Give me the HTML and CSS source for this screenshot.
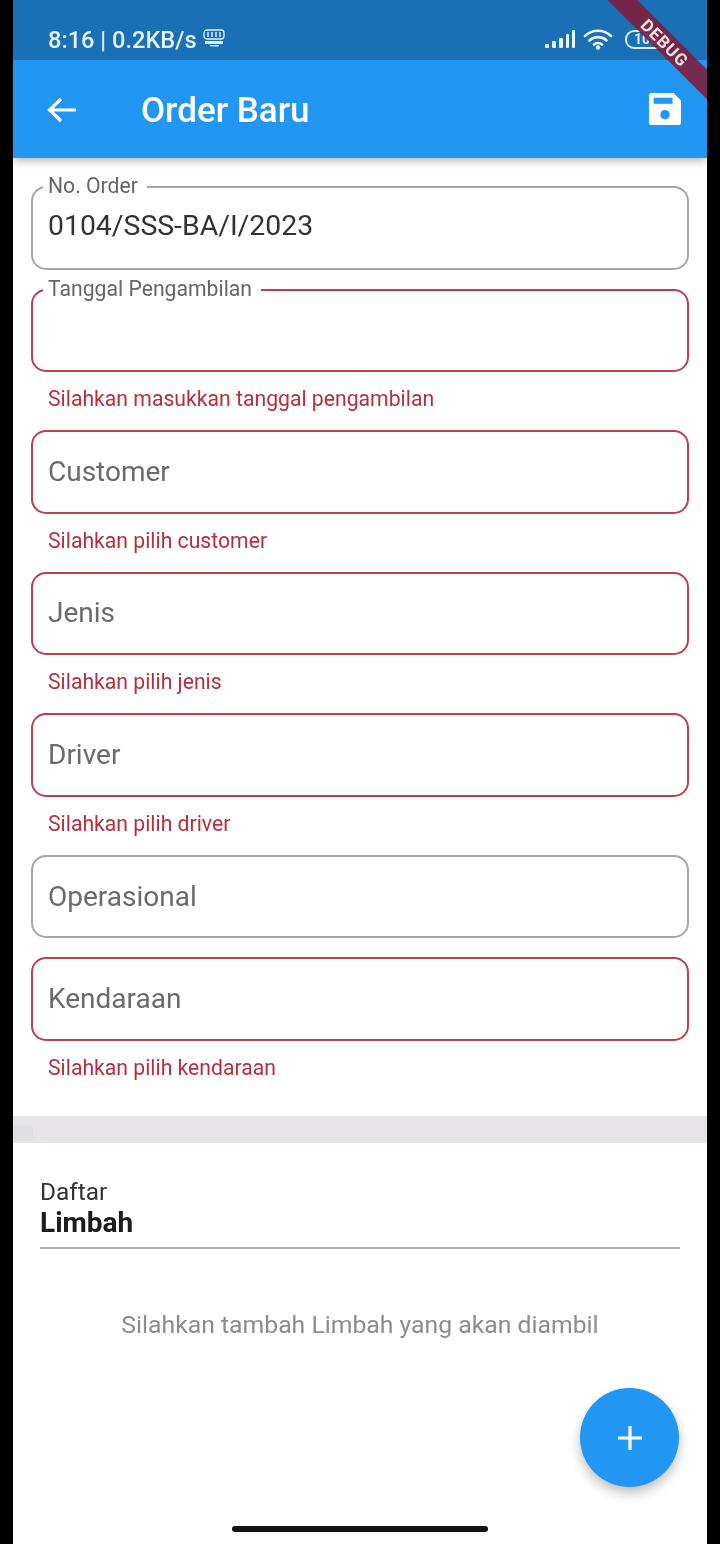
FILE: index.html
```html
<!DOCTYPE html>
<html lang="id">
<head>
<meta charset="utf-8">
<title>Order Baru</title>
<link rel="stylesheet" href="styles.css">
</head>
<body>
<div class="screen">
  <header class="top">
    <div class="status">
      <div class="status-left">
        <span>8:16 | 0.2KB/s</span>
        <svg class="promo" width="24" height="18" viewBox="0 0 24 18">
          <rect x="2" y="1" width="20" height="9" rx="3" fill="none" stroke="#dff1ff" stroke-width="1.3"/>
          <path d="M6 3v5M10 3v5M14 3v5M18 3v5" stroke="#dff1ff" stroke-width="1.4"/>
          <rect x="3" y="12" width="18" height="3" fill="#dff1ff"/>
          <rect x="8" y="16" width="9" height="1.4" fill="#dff1ff"/>
        </svg>
      </div>
      <div class="status-right">
        <svg width="32" height="20" viewBox="0 0 32 20">
          <g fill="#e6f5ff">
            <rect x="1" y="15" width="4" height="4" rx="1"/>
            <rect x="8" y="12" width="4" height="7" rx="1"/>
            <rect x="15" y="9" width="4" height="10" rx="1"/>
            <rect x="22" y="5" width="3" height="14" rx="1"/>
            <rect x="28" y="1" width="3" height="18" rx="1"/>
          </g>
        </svg>
        <svg class="wifi" width="30" height="22" viewBox="0 0 30 22">
          <g fill="none" stroke="#e6f5ff" stroke-width="2.6" stroke-linecap="round">
            <path d="M2 8C9 1 21 1 28 8"/>
            <path d="M6.5 12.5C11 8 19 8 23.5 12.5"/>
            <path d="M11 16.5C13 14.5 17 14.5 19 16.5"/>
          </g>
          <circle cx="15" cy="19.5" r="2.2" fill="#e6f5ff"/>
        </svg>
        <div class="battery">100</div>
      </div>
    </div>
    <div class="appbar">
      <svg class="back" width="32" height="28" viewBox="0 0 32 28">
        <path d="M30 14H4M15 3 3.500 14 15 25" fill="none" stroke="#fff" stroke-width="3.200"/>
      </svg>
      <h1>Order Baru</h1>
      <svg class="save" width="34" height="34" viewBox="0 0 36 36">
        <path fill="#fff" d="M4 1h23l8 8v23a3 3 0 0 1-3 3H4a3 3 0 0 1-3-3V4a3 3 0 0 1 3-3z"/>
        <rect x="6" y="6" width="20" height="6.500" fill="#2196f3"/>
        <circle cx="18" cy="24" r="5" fill="#2196f3"/>
      </svg>
    </div>
  </header>

  <main class="form">
    <div class="field floated">
      <label>No. Order</label>
      <div class="value">0104/SSS-BA/I/2023</div>
    </div>
    <div class="field floated invalid">
      <label>Tanggal Pengambilan</label>
    </div>
    <p class="error">Silahkan masukkan tanggal pengambilan</p>
    <div class="field invalid"><div class="hint">Customer</div></div>
    <p class="error">Silahkan pilih customer</p>
    <div class="field invalid"><div class="hint">Jenis</div></div>
    <p class="error">Silahkan pilih jenis</p>
    <div class="field invalid"><div class="hint">Driver</div></div>
    <p class="error">Silahkan pilih driver</p>
    <div class="field"><div class="hint">Operasional</div></div>
    <div class="field invalid"><div class="hint">Kendaraan</div></div>
    <p class="error">Silahkan pilih kendaraan</p>
  </main>

  <div class="divider"><span class="divider-mark"></span></div>

  <section class="list">
    <div class="list-head">
      <div class="list-over">Daftar</div>
      <div class="list-title">Limbah</div>
    </div>
    <p class="empty">Silahkan tambah Limbah yang akan diambil</p>
  </section>

  <button class="fab" aria-label="Tambah">
    <svg width="28" height="28" viewBox="0 0 28 28">
      <path d="M14 2v24M2 14h24" stroke="#fff" stroke-width="3.200"/>
    </svg>
  </button>
  <div class="debug"><span>DEBUG</span></div>
  <div class="home"></div>
</div>
</body>
</html>
```

FILE: styles.css
```css
* { box-sizing: border-box; }
html, body { margin: 0; height: 1544px; background: #000; overflow: hidden; }
body { font-family: Roboto, "Noto Sans", sans-serif; }

.screen {
  position: relative;
  width: 694px;
  height: 1544px;
  margin: 0 13px;
  background: #fff;
  overflow: hidden;
  filter: blur(0.5px);
}

.top { box-shadow: 0 3px 8px rgba(0,0,0,.28); position: relative; }

.status {
  height: 60px;
  background: #1b6fb5;
  display: flex;
  justify-content: space-between;
  align-items: center;
  padding: 20px 40px 0 35px;
  color: #e3f3ff;
  font-size: 23.6px;
  font-weight: 500;
}
.status-left { display: flex; align-items: center; gap: 5px; }
.promo { margin-top: -4px; }
.status-right { display: flex; align-items: center; gap: 8px; margin-top: -2px; }
.wifi { margin: 0 4px 0 -1px; }
.battery {
  width: 42px;
  height: 19px;
  border: 2px solid #d5edff;
  border-radius: 9px;
  color: #d5edff;
  font-size: 14px;
  font-weight: 700;
  line-height: 15px;
  text-align: center;
}

.appbar {
  height: 98px;
  background: #2196f3;
  display: flex;
  align-items: center;
  padding: 0 25px 0 33px;
  color: #fff;
}
.back { flex: none; margin-top: 1px; }
.appbar h1 {
  flex: 1;
  margin: 4px 0 0 63px;
  font-size: 35px;
  font-weight: 500;
  line-height: 40px;
}
.save { flex: none; }

.form { padding: 28px 18px 0 18px; }

.field {
  position: relative;
  height: 83.5px;
  margin-bottom: 19px;
  border: 2px solid #a6a6a6;
  border-radius: 15px;
  padding: 0 15px;
  display: flex;
  align-items: center;
}
.field.invalid { border-color: #b8424f; }
.field label {
  position: absolute;
  left: 10px;
  top: -14px;
  padding: 0 9px 0 5px;
  background: #fff;
  color: #666;
  font-size: 21.2px;
  line-height: 24px;
}
.value { color: #333; font-size: 28.4px; line-height: 36px; margin-top: -3px; }
.hint { color: #6b6b6b; font-size: 28px; line-height: 36px; }

.error {
  margin: -4px 0 0;
  padding-left: 17px;
  height: 43.1px;
  color: #b3303e;
  font-size: 21.2px;
  line-height: 24px;
}

.divider {
  height: 27px;
  margin-top: 17px;
  background: #e6e4e6;
  position: relative;
}
.divider-mark {
  display: block;
  width: 20px;
  height: 15px;
  background: #dfdfe2;
  transform: translateY(10px);
}

.list { padding: 35px 27px 0; }
.list-head { border-bottom: 2px solid #b0b0b0; height: 71px; }
.list-over { color: #333; font-size: 24.4px; line-height: 28px; }
.list-title { color: #1c1c1c; font-size: 28px; font-weight: 700; line-height: 32px; margin-top: 1px; }
.empty {
  margin: 60px 0 0;
  text-align: center;
  color: #8c8c8c;
  font-size: 24.75px;
  line-height: 32px;
}

.fab {
  position: absolute;
  left: 567px;
  top: 1388px;
  width: 99px;
  height: 99px;
  border: 0;
  padding: 0;
  border-radius: 50%;
  background: #2196f3;
  box-shadow: 0 6px 12px rgba(0,0,0,.25);
  display: flex;
  align-items: center;
  justify-content: center;
}

.debug {
  position: absolute;
  left: 577px;
  top: 32px;
  width: 150px;
  height: 21px;
  background: rgba(126,30,60,.9);
  transform: rotate(45deg);
  transform-origin: center;
  display: flex;
  align-items: center;
  justify-content: center;
  color: #f4dfe3;
  font-size: 17px;
  font-weight: 700;
  letter-spacing: 1px;
}

.home {
  position: absolute;
  left: 219px;
  top: 1526px;
  width: 256px;
  height: 6px;
  border-radius: 3px;
  background: #111;
}
```
